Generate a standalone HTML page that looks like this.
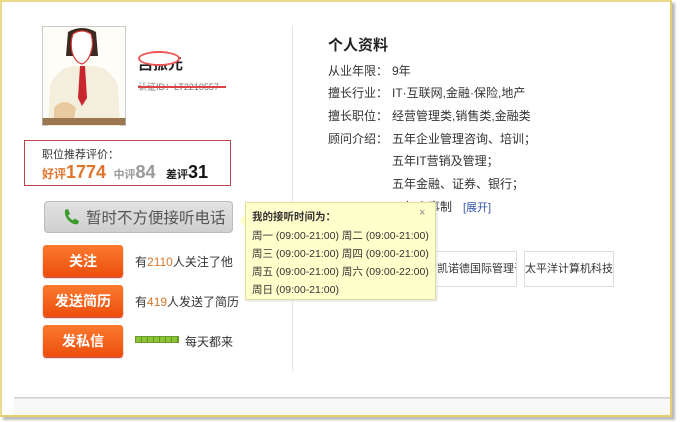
<!DOCTYPE html>
<html><head><meta charset="utf-8"><style>
*{margin:0;padding:0;box-sizing:border-box}
body{width:680px;height:422px;background:#fff;position:relative;overflow:hidden;font-family:"Liberation Sans","Noto Sans CJK SC",sans-serif;color:#333}
.a{position:absolute}
.frame{left:0;top:0;width:672px;height:417px;border:2px solid #ecd98a;border-right-color:#e6cf73;border-bottom-color:#e6cf73;box-shadow:3px 3px 2px #bbb}
.btn{left:43px;width:80px;height:32px;background:linear-gradient(#fb7a30,#ec4f0c);border-radius:3px;color:#fff;font-size:14px;font-weight:bold;text-align:center;line-height:32px;box-shadow:0 1px 1px #b33}
.t12{font-size:12px}
.lbl{font-size:12px;color:#333}
.tip{font-size:10.5px;color:#333;white-space:nowrap}
.num{color:#d3772d}
</style></head><body>
<div class="a frame"></div>
<div class="a" style="left:14px;top:397px;width:656px;height:2px;background:linear-gradient(#ccc,#e6e6e6)"></div>
<div class="a" style="left:14px;top:399px;width:656px;height:16px;background:#f8f8f8"></div>
<div class="a" style="left:292px;top:26px;width:1px;height:345px;background:#e6e6e6"></div>

<!-- photo -->
<svg class="a" style="left:42px;top:26px" width="84" height="100" viewBox="0 0 84 100">
<rect x="0.5" y="0.5" width="83" height="99" fill="#fffdf8" stroke="#ccc"/>
<path d="M6 100 L8 60 Q14 44 30 40 L54 40 Q70 44 76 60 L78 100Z" fill="#f4eedd"/>
<path d="M26 6 Q40 -2 54 6 L56 30 L24 30Z" fill="#3a2a20"/>
<path d="M31 8 Q40 2 49 8 Q52 18 49 26 Q46 36 40 38 Q33 36 30 26 Q28 16 31 8Z" fill="#fff" stroke="#d33" stroke-width="1.2"/>
<path d="M38 40 L43 40 L45 72 L40 80 L36 72Z" fill="#c8252d"/>
<path d="M12 82 Q22 70 34 82 L32 92 L12 92Z" fill="#e8c9a0"/>
<rect x="0.5" y="92" width="83" height="7" fill="#9b7650"/>
</svg>
<div class="a" style="left:138px;top:53px;font-size:15px;color:#222;font-weight:bold">吕振元</div>
<div class="a" style="left:138px;top:51px;width:42px;height:15px;background:#fff;border:2px solid #e55;border-radius:50%"></div>
<div class="a" style="left:138px;top:80px;font-size:9px;color:#777">认证ID：LT2210557</div>
<div class="a" style="left:138px;top:86px;width:88px;height:2px;background:#d44"></div>

<!-- rating -->
<div class="a" style="left:24px;top:140px;width:207px;height:46px;border:1.5px solid #b8454a"></div>
<div class="a t12" style="left:42px;top:146px;font-size:11px">职位推荐评价：</div>
<div class="a" style="left:42px;top:162px;white-space:nowrap"><span style="color:#e0742a;font-size:12px;font-weight:bold">好评</span><span style="color:#e0742a;font-size:18px;font-weight:bold">1774</span> <span style="color:#999;font-size:11px;font-weight:bold;margin-left:3px">中评</span><span style="color:#999;font-size:18px;font-weight:bold">84</span> <span style="color:#222;font-size:11px;font-weight:bold;margin-left:6px">差评</span><span style="color:#111;font-size:18px;font-weight:bold">31</span></div>

<!-- phone button -->
<div class="a" style="left:44px;top:201px;width:189px;height:32px;background:linear-gradient(#e2e2e2,#cfcfcf);border:1px solid #bbb;border-radius:4px"></div>
<svg class="a" style="left:62px;top:208px" width="18" height="18" viewBox="0 0 18 18"><path d="M3 2 L6 1 L8 6 L6 7.5 Q8 11 11 12.5 L12.5 10.5 L17 13 L16 16 Q12 17.5 7 13 Q2 8 3 2Z" fill="#3a9a2c"/></svg>
<div class="a" style="left:86px;top:206px;font-size:15.5px;color:#555;white-space:nowrap">暂时不方便接听电话</div>

<div class="a btn" style="top:245px">关注</div>
<div class="a btn" style="top:285px">发送简历</div>
<div class="a btn" style="top:325px">发私信</div>
<div class="a t12" style="left:135px;top:253px">有<span class="num">2110</span>人关注了他</div>
<div class="a t12" style="left:135px;top:293px">有<span class="num">419</span>人发送了简历</div>
<div class="a" style="left:135px;top:336px;width:44px;height:7px;background:repeating-linear-gradient(90deg,#8cc53a 0 5px,#5e9a1c 5px 6px);border:1px solid #6a9a2a"></div>
<div class="a t12" style="left:185px;top:333px">每天都来</div>

<!-- right -->
<div class="a" style="left:328px;top:34px;font-size:15px;font-weight:bold;color:#222">个人资料</div>
<div class="a lbl" style="left:328px;top:62px">从业年限：</div><div class="a lbl" style="left:392px;top:62px">9年</div>
<div class="a lbl" style="left:328px;top:84px">擅长行业：</div><div class="a lbl" style="left:392px;top:84px">IT·互联网,金融·保险,地产</div>
<div class="a lbl" style="left:328px;top:107px">擅长职位：</div><div class="a lbl" style="left:392px;top:107px">经营管理类,销售类,金融类</div>
<div class="a lbl" style="left:328px;top:130px">顾问介绍：</div><div class="a lbl" style="left:392px;top:130px">五年企业管理咨询、培训；</div>
<div class="a lbl" style="left:392px;top:152px">五年IT营销及管理；</div>
<div class="a lbl" style="left:392px;top:175px">五年金融、证券、银行；</div>
<div class="a lbl" style="left:392px;top:198px">一年人事制</div>
<div class="a" style="left:463px;top:199px;font-size:11px;color:#3355aa">[展开]</div>
<div class="a" style="left:410px;top:251px;width:107px;height:36px;border:1px solid #ddd;font-size:11px;line-height:34px;padding-left:26px;white-space:nowrap;overflow:hidden">凯诺德国际管理咨</div>
<div class="a" style="left:524px;top:251px;width:90px;height:36px;border:1px solid #ddd;font-size:11px;line-height:34px;text-align:center;white-space:nowrap;overflow:hidden">太平洋计算机科技</div>

<!-- tooltip -->
<div class="a" style="left:245px;top:202px;width:191px;height:98px;background:#ffffcc;border:1px solid #e3dca0;box-shadow:1px 1px 2px #ddd"></div>
<div class="a" style="left:239px;top:215px;width:0;height:0;border:6px solid transparent;border-right-color:#ffffcc;border-left:0"></div>
<div class="a tip" style="left:252px;top:209px;font-weight:bold">我的接听时间为：</div>
<div class="a" style="left:419px;top:207px;font-size:11px;color:#888">×</div>
<div class="a tip" style="left:252px;top:228px">周一 (09:00-21:00) 周二 (09:00-21:00)</div>
<div class="a tip" style="left:252px;top:246px">周三 (09:00-21:00) 周四 (09:00-21:00)</div>
<div class="a tip" style="left:252px;top:264px">周五 (09:00-21:00) 周六 (09:00-22:00)</div>
<div class="a tip" style="left:252px;top:282px">周日 (09:00-21:00)</div>
</body></html>
